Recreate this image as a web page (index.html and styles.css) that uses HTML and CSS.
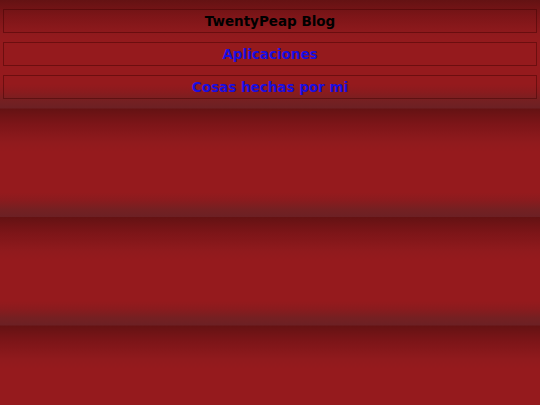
FILE: index.html
```html
<!DOCTYPE html>
<html>
<head>
<meta charset="utf-8">
<link rel="stylesheet" href="styles.css">
</head>
<body>
<div class="menu">
  <div class="item title">TwentyPeap Blog</div>
  <div class="item"><a href="#">Aplicaciones</a></div>
  <div class="item"><a href="#">Cosas hechas por mi</a></div>
</div>
</body>
</html>
```
FILE: styles.css
```css
html, body {
  margin: 0;
  padding: 0;
  height: 100%;
}
body {
  font-family: "DejaVu Sans", Verdana, sans-serif;
  background-color: #951a1d;
  background-image: linear-gradient(to bottom,
    #641213 0px,
    #7d1518 16px,
    #901a1d 34px,
    #951a1d 44px,
    #951a1d 84px,
    #8a1b1e 92px,
    #742022 101px,
    #6c2024 108.5px);
  background-size: 100% 108.5px;
  background-repeat: repeat;
}
.menu {
  display: flex;
  flex-direction: column;
  gap: 9px;
  padding: 9px 3px;
}
.item {
  border: 1px solid rgba(60, 0, 0, 0.45);
  height: 22px;
  line-height: 22px;
  text-align: center;
  font-weight: bold;
  font-size: 13.5px;
}
.title {
  color: #000;
}
.item a {
  color: #1a0ee0;
  text-decoration: none;
}
```
